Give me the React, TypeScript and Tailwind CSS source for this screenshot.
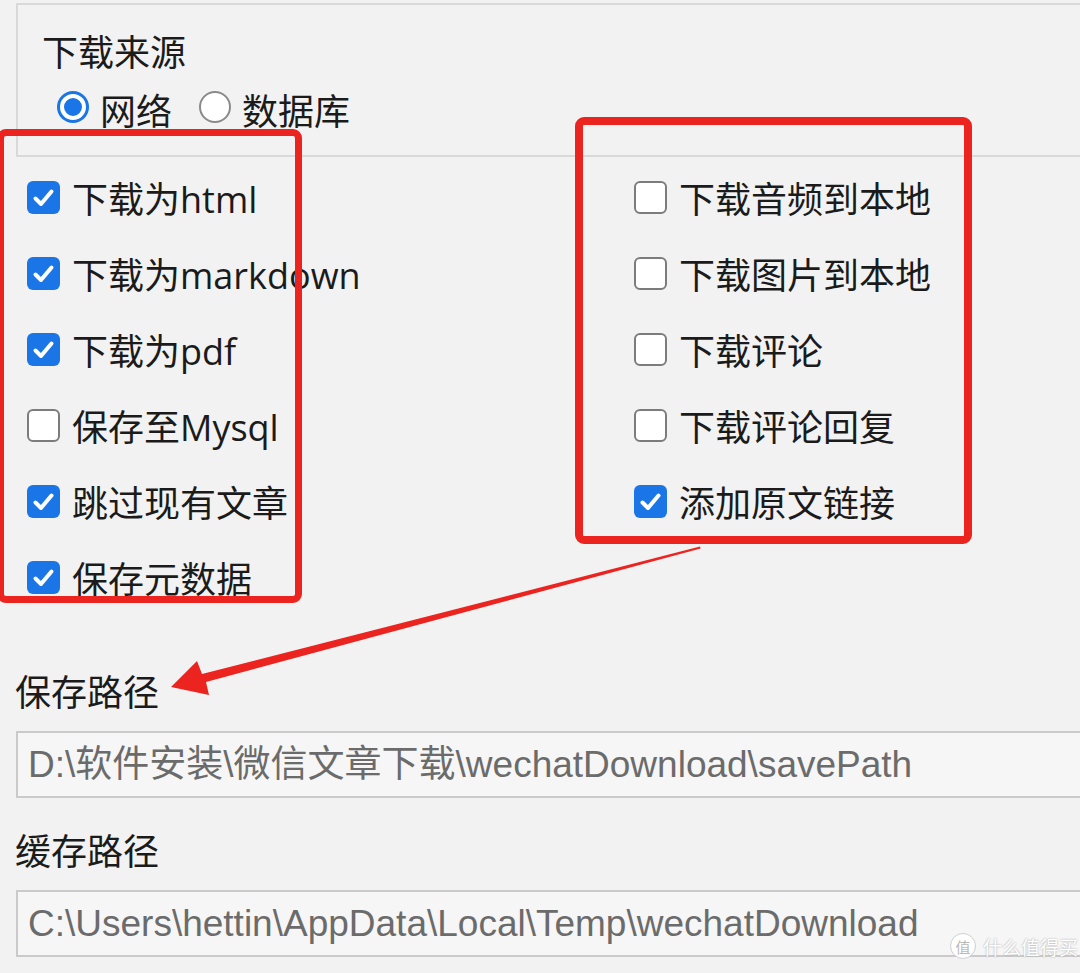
import React from 'react';

const labelFont = "font-['Open_Sans','Noto_Sans_CJK_SC',sans-serif]";
const inputFont = "font-['Liberation_Sans','Noto_Sans_CJK_SC',sans-serif]";

const leftOptions = [
  { label: '下载为html', checked: true },
  { label: '下载为markdown', checked: true },
  { label: '下载为pdf', checked: true },
  { label: '保存至Mysql', checked: false },
  { label: '跳过现有文章', checked: true },
  { label: '保存元数据', checked: true },
];

const rightOptions = [
  { label: '下载音频到本地', checked: false },
  { label: '下载图片到本地', checked: false },
  { label: '下载评论', checked: false },
  { label: '下载评论回复', checked: false },
  { label: '添加原文链接', checked: true },
];

function CheckBox({ checked }: { checked: boolean }) {
  if (!checked) {
    return <div className="w-[33px] h-[33px] shrink-0 rounded-[6px] border-2 border-[#7c7c7c] bg-white mb-[6px]" />;
  }
  return (
    <div className="w-[33px] h-[33px] shrink-0 rounded-[6px] bg-[#1a75e6] flex items-center justify-center mb-[6px]">
      <svg width="33" height="33" viewBox="0 0 33 33">
        <path d="M8.5 17.5 L14 23 L24.5 10.5" fill="none" stroke="#fff" strokeWidth="4" strokeLinecap="round" strokeLinejoin="round" />
      </svg>
    </div>
  );
}

function Radio({ checked }: { checked: boolean }) {
  if (checked) {
    return (
      <div className="w-[32px] h-[32px] shrink-0 rounded-full bg-[#1a75e6] p-[3px] mb-[10px]">
        <div className="w-full h-full rounded-full border-[4px] border-white bg-[#1a75e6]" />
      </div>
    );
  }
  return <div className="w-[32px] h-[32px] shrink-0 rounded-full border-2 border-[#8a8a8a] bg-white mb-[10px]" />;
}

function OptionRow({ label, checked }: { label: string; checked: boolean }) {
  return (
    <div className="h-[76px] shrink-0 flex items-center gap-[12px]">
      <CheckBox checked={checked} />
      <span className={`${labelFont} text-[36px] leading-none text-[#1b1b1b] whitespace-nowrap`}>{label}</span>
    </div>
  );
}

function PathField({ label, value }: { label: string; value: string }) {
  return (
    <div className="flex flex-col">
      <div className={`${labelFont} text-[36px] leading-none text-[#1b1b1b] pl-[15px]`}>{label}</div>
      <div className="ml-[16px] mt-[20px] h-[67px] border-2 border-r-0 border-[#cacaca] bg-[#f6f6f6] flex items-center pl-[10px]">
        <span className={`${inputFont} text-[37px] leading-none text-[#6b6b6b] whitespace-nowrap`}>{value}</span>
      </div>
    </div>
  );
}

export default function App() {
  return (
    <div className="relative w-[1080px] h-[973px] overflow-hidden bg-[#f2f2f2]">
      {/* source group */}
      <div className="mt-[3px] ml-[16px] h-[154px] border-2 border-r-0 border-[#d9d9d9] pl-[24px] pt-[30px]">
        <div className={`${labelFont} text-[36px] leading-none text-[#1b1b1b]`}>下载来源</div>
        <div className="mt-[20px] ml-[15px] flex items-center">
          <Radio checked />
          <span className={`${labelFont} text-[36px] leading-none text-[#1b1b1b] ml-[11px]`}>网络</span>
          <div className="ml-[27px]">
            <Radio checked={false} />
          </div>
          <span className={`${labelFont} text-[36px] leading-none text-[#1b1b1b] ml-[11px]`}>数据库</span>
        </div>
      </div>

      {/* options, clipped by the scroll area */}
      <div className="h-[439px] overflow-hidden pt-[5px] flex items-start">
        <div className="w-[634px] shrink-0 pl-[27px] flex flex-col">
          {leftOptions.map((o) => (
            <OptionRow key={o.label} label={o.label} checked={o.checked} />
          ))}
        </div>
        <div className="flex flex-col">
          {rightOptions.map((o) => (
            <OptionRow key={o.label} label={o.label} checked={o.checked} />
          ))}
        </div>
      </div>

      {/* paths */}
      <div className="mt-[79px] flex flex-col gap-[36px]">
        <PathField label="保存路径" value="D:\软件安装\微信文章下载\wechatDownload\savePath" />
        <PathField label="缓存路径" value="C:\Users\hettin\AppData\Local\Temp\wechatDownload" />
      </div>

      {/* red annotation boxes */}
      <div className="absolute left-[-3px] top-[129px] w-[305px] h-[474px] border-[7px] border-[#ec2420] rounded-[9px] pointer-events-none" />
      <div className="absolute left-[575px] top-[117px] w-[397px] h-[427px] border-[8px] border-[#ec2420] rounded-[9px] pointer-events-none" />

      {/* arrow */}
      <svg className="absolute left-0 top-0 pointer-events-none" width="1080" height="973" viewBox="0 0 1080 973">
        <polygon
          points="700,546.5 700.6,548.6 206,682 209,695 171,687 197,661 202,674"
          fill="#ec2420"
        />
      </svg>

      {/* watermark */}
      <div className="absolute left-[950px] top-[933px] flex items-center gap-[7px] pointer-events-none">
        <div className="w-[26px] h-[26px] rounded-full bg-white border border-[#cfcfcf] flex items-center justify-center text-[15px] leading-none text-[#b9b9b9] font-['Noto_Sans_CJK_SC',sans-serif]">
          值
        </div>
        <span className="text-[19px] leading-none text-white font-['Noto_Sans_CJK_SC',sans-serif] [text-shadow:0_0_2px_#9a9a9a]">
          什么值得买
        </span>
      </div>
    </div>
  );
}
